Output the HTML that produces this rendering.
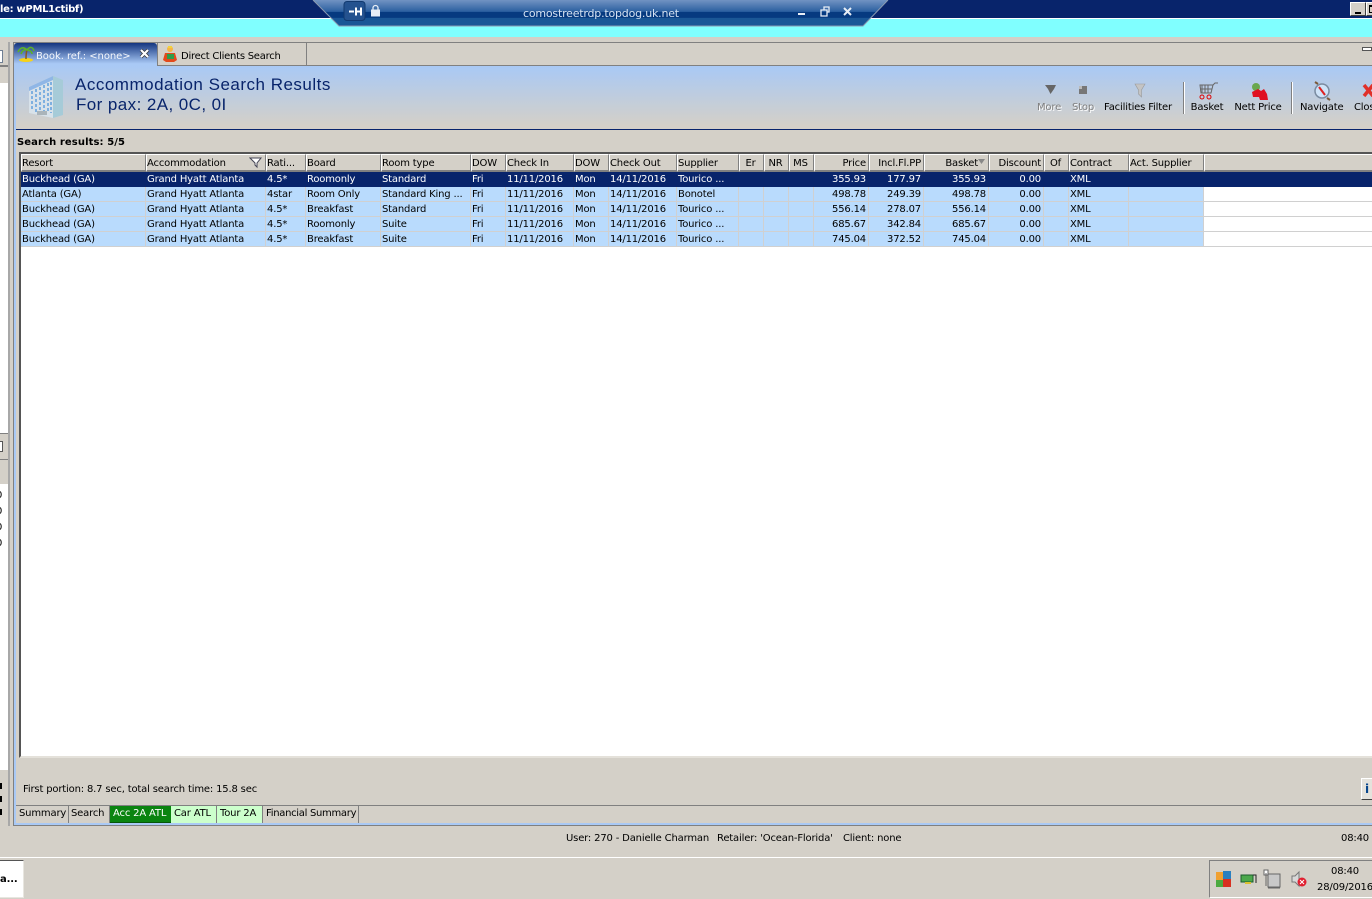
<!DOCTYPE html>
<html><head><meta charset="utf-8"><style>
*{box-sizing:border-box}
html,body{margin:0;padding:0;width:1372px;height:899px;overflow:hidden;background:#d4d0c8}
body{position:relative;font:10px/13px "DejaVu Sans","Liberation Sans",sans-serif;color:#000;letter-spacing:-.17px}
.a{position:absolute;white-space:nowrap}
table{position:absolute;left:21px;top:154px;width:1351px;border-collapse:separate;border-spacing:0;table-layout:fixed;font:10px/13px "DejaVu Sans","Liberation Sans",sans-serif;letter-spacing:-.17px}
th{height:18px;padding:2px 0 0 0;font-weight:normal;text-align:left;background:#d4d0c8;border-top:1px solid #fff;border-left:1px solid #fff;border-right:1px solid #808080;border-bottom:2px solid #808080;overflow:hidden;white-space:nowrap}
td{height:15px;padding:1px 0 0 1px;background:#b9dbfd;border-right:1px solid #d0d0d0;border-bottom:1px solid #d0d0d0;overflow:hidden;white-space:nowrap}
td.r,th.r{text-align:right;padding-right:2px;padding-left:0}
th.c{text-align:center;padding-left:0;padding-right:2px}
tr.s td{background:#08246b;color:#fff;border-color:#08246b}
td.w{background:#fff;border-right:0}
.tb{text-align:center;transform:translateX(-50%)}
.g{color:#808080;text-shadow:1px 1px 0 #fff}
.bt{position:absolute;top:806px;height:17px;line-height:16px;padding-left:3px;border-right:1px solid #808080;white-space:nowrap}
</style></head><body>

<div class="a" style="left:0;top:0;width:1372px;height:18px;background:#08246b"></div>
<div class="a" style="left:0;top:18px;width:1372px;height:1px;background:#fff"></div>
<div class="a" style="left:0;top:19px;width:1372px;height:18px;background:#80ffff"></div>
<div class="a" style="left:0;top:3px;color:#fff;font-weight:bold;font-size:10px;letter-spacing:-.3px">le: wPML1ctibf)</div>

<svg class="a" style="left:310px;top:0" width="582" height="28">
<defs><linearGradient id="rd" x1="0" y1="0" x2="0" y2="1"><stop offset="0" stop-color="#7193c2"/><stop offset=".45" stop-color="#2a5f9f"/><stop offset=".46" stop-color="#063a80"/><stop offset=".68" stop-color="#063a80"/><stop offset=".69" stop-color="#1a5796"/><stop offset="1" stop-color="#1a5796"/></linearGradient></defs>
<polygon points="3,0 29,26 553,26 578,0" fill="url(#rd)"/>
<polyline points="3,0 29,26 553,26 578,0" fill="none" stroke="#8a9ab0" stroke-width="1"/>
<rect x="34" y="1.5" width="21" height="19" rx="3" fill="#24528f" stroke="#123a70"/>
<path d="M39 11.500h5M45 11.500h6M46 7.500v8M51 7.500v8" stroke="#fff" stroke-width="2" fill="none"/>
<rect x="61" y="9.500" width="9" height="7" fill="#e8eef6"/><path d="M63 9.500V8a2.500 2.500 0 0 1 5 0v1.500" stroke="#e8eef6" stroke-width="1.300" fill="none"/>
<rect x="488" y="13" width="7" height="2" fill="#e8eef6"/>
<path d="M511 10h6v6h-6zM514 10V7h5v5h-2" stroke="#e8eef6" stroke-width="1.3" fill="none"/>
<path d="M534 8l7 7M541 8l-7 7" stroke="#e8eef6" stroke-width="2"/>
</svg>
<div class="a" style="left:523px;top:7px;color:#d5e2f2;font-size:11px;letter-spacing:-.2px">comostreetrdp.topdog.uk.net</div>

<div class="a" style="left:1350px;top:2px;width:16px;height:14px;background:#d4d0c8;border:1px solid;border-color:#fff #404040 #404040 #fff"><div class="a" style="left:4px;top:9px;width:6px;height:2px;background:#000"></div></div>
<div class="a" style="left:1366px;top:2px;width:16px;height:14px;background:#d4d0c8;border:1px solid;border-color:#fff #404040 #404040 #fff"><div class="a" style="left:2px;top:2px;width:9px;height:8px;border:1px solid #000;border-top-width:2px"></div></div>

<!-- left panel -->
<div class="a" style="left:0;top:42px;width:9px;height:784px;background:#d4d0c8"></div>
<div class="a" style="left:0;top:65px;width:9px;height:2px;background:#808080"></div>
<div class="a" style="left:0;top:50px;width:3px;height:13px;background:#fff;border:1px solid #6f7f93;border-left:0"></div>
<div class="a" style="left:0;top:67px;width:9px;height:16px;background:#d4d0c8"></div>
<div class="a" style="left:0;top:83px;width:9px;height:350px;background:#fff"></div>
<div class="a" style="left:0;top:433px;width:9px;height:26px;background:#d4d0c8;border-top:1px solid #808080"></div>
<div class="a" style="left:0;top:441px;width:3px;height:11px;background:#fff;border:1px solid #555;border-left:0"></div>
<div class="a" style="left:0;top:459px;width:9px;height:1px;background:#808080"></div>
<div class="a" style="left:0;top:460px;width:8px;height:24px;background:#d4d0c8"></div>
<div class="a" style="left:0;top:484px;width:8px;height:286px;background:#fff"></div>
<div class="a" style="left:-4px;top:488px;line-height:16px;font-size:10px;white-space:normal;width:10px">0 0 0 0</div>
<div class="a" style="left:0;top:770px;width:8px;height:56px;background:#d4d0c8"></div>
<div class="a" style="left:0;top:783px;width:2px;height:6px;background:#000"></div>
<div class="a" style="left:0;top:796px;width:2px;height:6px;background:#000"></div>
<div class="a" style="left:0;top:809px;width:2px;height:6px;background:#000"></div>
<div class="a" style="left:8px;top:42px;width:2px;height:784px;background:#a8a8a8"></div>

<!-- main frame -->
<div class="a" style="left:13px;top:42px;width:1359px;height:1px;background:#808080"></div>
<div class="a" style="left:13px;top:42px;width:1px;height:784px;background:#808080"></div>
<div class="a" style="left:14px;top:65px;width:2px;height:760px;background:#a9c9f5"></div>
<div class="a" style="left:14px;top:823px;width:1358px;height:2px;background:#a9c9f5"></div>
<div class="a" style="left:13px;top:825px;width:1359px;height:1px;background:#808080"></div>

<!-- toolbar band -->
<div class="a" style="left:16px;top:66px;width:1356px;height:63px;background:linear-gradient(#a9c9f5,#d4d0c8 95%)"></div>
<div class="a" style="left:157px;top:65px;width:1215px;height:1px;background:#808080"></div>
<div class="a" style="left:16px;top:129px;width:1356px;height:1px;background:#08246b"></div>

<!-- tabs -->
<div class="a" style="left:14px;top:43px;width:143px;height:23px;background:linear-gradient(#14357f,#a9c9f5 90%);border-radius:3px 3px 0 0"></div>
<div class="a" style="left:157px;top:43px;width:1px;height:23px;background:#808080"></div>
<div class="a" style="left:306px;top:43px;width:1px;height:22px;background:#808080"></div>
<svg class="a" style="left:16px;top:44px" width="20" height="20"><ellipse cx="10" cy="16" rx="7" ry="2" fill="#f6d21a"/><path d="M10 15C10 11 10 9 11 6" stroke="#8a5a1c" stroke-width="1.500" fill="none"/><path d="M11 6C7 2 4 4 2 8M11 6C8 5 6 7 5 10M11 6C14 2 17 3 18 7M11 6c3 0 5 2 5 4" stroke="#5cb02a" stroke-width="1.600" fill="none"/></svg>
<div class="a" style="left:36px;top:49px;color:#f4f7fc;font-size:10px;letter-spacing:-.05px;padding-top:1px">Book. ref.: &lt;none&gt;</div>
<svg class="a" style="left:139px;top:48px" width="12" height="12"><path d="M2 2l7 7M9 2l-7 7" stroke="#333" stroke-width="3.600"/><path d="M2 2l7 7M9 2l-7 7" stroke="#fff" stroke-width="2.200"/></svg>
<svg class="a" style="left:162px;top:45px" width="18" height="18"><circle cx="8" cy="4" r="3" fill="#f5b544"/><path d="M3 8h10l2 7-3 2H4l-3-2z" fill="#e24a1c"/><rect x="5" y="9" width="7" height="5" fill="#2e9e4a"/><rect x="6" y="1" width="4" height="2" fill="#f2d23a"/></svg>
<div class="a" style="left:181px;top:50px;letter-spacing:-.25px">Direct Clients Search</div>
<div class="a" style="left:1362px;top:47px;width:10px;height:4px;background:#fff;border:1px solid #555"></div>

<!-- header band -->
<svg class="a" style="left:27px;top:73px" width="38" height="48">
<polygon points="2,14 26,3 26,45 2,40" fill="#d8e2ea"/><polygon points="26,3 36,7 36,42 26,45" fill="#a6cbd8"/>
<polygon points="2,14 26,3 26,7 2,18" fill="#8fb6e6"/>
<g stroke="#7eb0e0" stroke-width="2" stroke-dasharray="3 2"><path d="M5 18v20M9 16v23M13 14v25M17 12v27M21 10v30M24 9v31"/></g>
<rect x="10" y="38" width="10" height="4" fill="#aab4ba"/>
</svg>
<div class="a" style="left:75px;top:75px;font:17px/20px 'Liberation Sans',sans-serif;letter-spacing:.5px;color:#08246b">Accommodation Search Results</div>
<div class="a" style="left:76px;top:95px;font:17px/20px 'Liberation Sans',sans-serif;letter-spacing:.42px;color:#08246b">For pax: 2A, 0C, 0I</div>

<!-- toolbar -->
<svg class="a" style="left:1040px;top:80px" width="332" height="24">
<path d="M5 5h11l-2 4-3.500 5L8 9z" fill="#666"/>
<rect x="39" y="6" width="8" height="8" fill="#777"/><rect x="39" y="6" width="3" height="3" fill="#bbb"/>
<path d="M95 4h10l-3.500 6v7l-3-3v-4z" fill="#c4c4c4" stroke="#999" stroke-width=".6"/>
<path d="M160 5h13l-2 8h-10zM162 5v8M165 5v8M168 5v8M160 9h12M173 5l2-2h3" stroke="#666" fill="none"/>
<circle cx="162" cy="17" r="2" fill="none" stroke="#d00" stroke-width="1"/><circle cx="169" cy="17" r="2" fill="none" stroke="#d00" stroke-width="1"/>
<circle cx="216" cy="7" r="4" fill="#6aa84f"/><path d="M212 12l6-3 3 2 3-2 3 5 1 6h-8l-1-3h-6z" fill="#e01020"/>
<circle cx="282" cy="11" r="7" fill="#cfe3f8" stroke="#7a8ba0" stroke-width="1.500"/><path d="M278 4l-3-2M287 18l3 2" stroke="#7a5a3a" stroke-width="2"/><path d="M279 7l6 8" stroke="#d22" stroke-width="2"/>
<path d="M324 5l9 11M333 5l-9 11" stroke="#e0302a" stroke-width="3.500"/>
</svg>
<div class="a" style="left:1183px;top:82px;width:1px;height:32px;background:#808080;box-shadow:1px 0 0 #fff"></div>
<div class="a" style="left:1291px;top:82px;width:1px;height:32px;background:#808080;box-shadow:1px 0 0 #fff"></div>
<div class="a tb g" style="left:1049px;top:101px">More</div>
<div class="a tb g" style="left:1083px;top:101px">Stop</div>
<div class="a tb" style="left:1138px;top:101px">Facilities Filter</div>
<div class="a tb" style="left:1207px;top:101px">Basket</div>
<div class="a tb" style="left:1258px;top:101px">Nett Price</div>
<div class="a" style="left:1300px;top:101px">Navigate</div>
<div class="a" style="left:1354px;top:101px">Close</div>

<div class="a" style="left:17px;top:136px;font-weight:bold;font-size:10px;letter-spacing:.1px">Search results: 5/5</div>

<!-- grid -->
<div class="a" style="left:19px;top:152px;width:1353px;height:606px;background:#fff;border-top:2px solid #555;border-left:2px solid #555;border-bottom:2px solid #e4e1da"></div>
<table>
<colgroup><col style="width:125px"><col style="width:120px"><col style="width:40px"><col style="width:75px"><col style="width:90px"><col style="width:35px"><col style="width:68px"><col style="width:35px"><col style="width:68px"><col style="width:62px"><col style="width:25px"><col style="width:25px"><col style="width:25px"><col style="width:55px"><col style="width:55px"><col style="width:65px"><col style="width:55px"><col style="width:25px"><col style="width:60px"><col style="width:75px"><col></colgroup>
<tr><th>Resort</th><th>Accommodation</th><th>Rati...</th><th>Board</th><th>Room type</th><th>DOW</th><th>Check In</th><th>DOW</th><th>Check Out</th><th>Supplier</th><th class="c">Er</th><th class="c">NR</th><th class="c">MS</th><th class="r">Price</th><th class="r">Incl.Fl.PP</th><th class="r" style="padding-right:10px">Basket</th><th class="r">Discount</th><th class="c">Of</th><th>Contract</th><th>Act. Supplier</th><th style="border-right:0"></th></tr>
<tr class="s"><td>Buckhead (GA)</td><td>Grand Hyatt Atlanta</td><td>4.5*</td><td>Roomonly</td><td>Standard</td><td>Fri</td><td>11/11/2016</td><td>Mon</td><td>14/11/2016</td><td>Tourico ...</td><td></td><td></td><td></td><td class="r">355.93</td><td class="r">177.97</td><td class="r">355.93</td><td class="r">0.00</td><td></td><td>XML</td><td></td><td></td></tr>
<tr><td>Atlanta (GA)</td><td>Grand Hyatt Atlanta</td><td>4star</td><td>Room Only</td><td>Standard King ...</td><td>Fri</td><td>11/11/2016</td><td>Mon</td><td>14/11/2016</td><td>Bonotel</td><td></td><td></td><td></td><td class="r">498.78</td><td class="r">249.39</td><td class="r">498.78</td><td class="r">0.00</td><td></td><td>XML</td><td></td><td class="w"></td></tr>
<tr><td>Buckhead (GA)</td><td>Grand Hyatt Atlanta</td><td>4.5*</td><td>Breakfast</td><td>Standard</td><td>Fri</td><td>11/11/2016</td><td>Mon</td><td>14/11/2016</td><td>Tourico ...</td><td></td><td></td><td></td><td class="r">556.14</td><td class="r">278.07</td><td class="r">556.14</td><td class="r">0.00</td><td></td><td>XML</td><td></td><td class="w"></td></tr>
<tr><td>Buckhead (GA)</td><td>Grand Hyatt Atlanta</td><td>4.5*</td><td>Roomonly</td><td>Suite</td><td>Fri</td><td>11/11/2016</td><td>Mon</td><td>14/11/2016</td><td>Tourico ...</td><td></td><td></td><td></td><td class="r">685.67</td><td class="r">342.84</td><td class="r">685.67</td><td class="r">0.00</td><td></td><td>XML</td><td></td><td class="w"></td></tr>
<tr><td>Buckhead (GA)</td><td>Grand Hyatt Atlanta</td><td>4.5*</td><td>Breakfast</td><td>Suite</td><td>Fri</td><td>11/11/2016</td><td>Mon</td><td>14/11/2016</td><td>Tourico ...</td><td></td><td></td><td></td><td class="r">745.04</td><td class="r">372.52</td><td class="r">745.04</td><td class="r">0.00</td><td></td><td>XML</td><td></td><td class="w"></td></tr>
</table>
<svg class="a" style="left:249px;top:156px" width="14" height="13"><path d="M1 2h11L8 7v4L6 9V7z" fill="#fff" stroke="#445" stroke-width="1"/></svg>
<svg class="a" style="left:977px;top:158px" width="10" height="8"><path d="M1 1h7L4.500 6z" fill="#888"/></svg>

<!-- footer -->
<div class="a" style="left:23px;top:783px">First portion: 8.7 sec, total search time: 15.8 sec</div>
<div class="a" style="left:1361px;top:778px;width:15px;height:22px;background:#e4e2dc;border:1px solid;border-color:#fff #404040 #404040 #fff;color:#08468c;font-weight:bold;font-size:12px;line-height:20px;padding-left:3px">i</div>
<div class="a" style="left:16px;top:805px;width:1356px;height:1px;background:#808080"></div>
<div class="bt" style="left:16px;width:53px">Summary</div>
<div class="bt" style="left:69px;width:41px;padding-left:2px">Search</div>
<div class="bt" style="left:110px;width:61px;background:#0a8410;color:#fff;border-right:0;box-shadow:inset 0 -1px 0 #06560a;padding-left:3px">Acc 2A ATL</div>
<div class="bt" style="left:171px;width:46px;background:#ccffcc">Car ATL</div>
<div class="bt" style="left:217px;width:46px;background:#ccffcc">Tour 2A</div>
<div class="bt" style="left:263px;width:96px;letter-spacing:-.3px">Financial Summary</div>

<!-- status -->
<div class="a" style="left:566px;top:832px">User: 270 - Danielle Charman</div>
<div class="a" style="left:717px;top:832px">Retailer: 'Ocean-Florida'</div>
<div class="a" style="left:843px;top:832px">Client: none</div>
<div class="a" style="left:1341px;top:832px">08:40</div>

<!-- taskbar -->
<div class="a" style="left:0;top:857px;width:1372px;height:1px;background:#fff"></div>
<div class="a" style="left:-3px;top:860px;width:27px;height:38px;background:#fff;border:1px solid;border-color:#555 #e8e6e0 #e8e6e0 #555"></div>
<div class="a" style="left:0;top:873px;font-weight:bold">a...</div>
<div class="a" style="left:1209px;top:860px;width:170px;height:38px;border:1px solid;border-color:#808080 #fff #fff #808080"></div>
<svg class="a" style="left:1214px;top:868px" width="100" height="22">
<rect x="2" y="4" width="7" height="8" fill="#f0a030"/><rect x="9" y="3" width="8" height="8" fill="#2a80c0"/><rect x="2" y="12" width="7" height="7" fill="#4caa40"/><rect x="9" y="11" width="8" height="8" fill="#d83020"/>
<rect x="27" y="7" width="12" height="7" fill="#4ca84c" stroke="#1c5c2c"/><path d="M39 7h3v8" stroke="#222" fill="none"/><path d="M31 15h6" stroke="#dcc030" stroke-width="2"/>
<rect x="54" y="6" width="12" height="13" fill="#c8c8c8" stroke="#666"/><path d="M52 5v13M50 2h4v5h-4zM54 20h12" stroke="#666" fill="#fff"/>
<path d="M78 8h3l4-4v14l-4-4h-3z" fill="#d8d8d8" stroke="#777"/><circle cx="88" cy="14" r="4.500" fill="#e02030"/><path d="M86 12l4 4M90 12l-4 4" stroke="#fff"/>
</svg>
<div class="a" style="left:1331px;top:865px">08:40</div>
<div class="a" style="left:1317px;top:881px">28/09/2016</div>
</body></html>
